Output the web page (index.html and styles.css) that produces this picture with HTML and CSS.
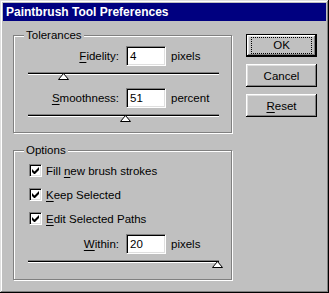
FILE: index.html
```html
<!DOCTYPE html>
<html lang="en">
<head>
  <meta charset="UTF-8">
  <title>Paintbrush Tool Preferences</title>
  <link rel="stylesheet" href="styles.css">
</head>
<body>

<div class="dialog">
  <div class="titlebar">Paintbrush Tool Preferences</div>

  <div class="dialog-body">
    <div class="groups">
      <fieldset class="group group-tolerances">
        <legend>Tolerances</legend>

        <div class="field field-first">
          <label class="field-label"><u>F</u>idelity:</label>
          <div class="input">4</div>
          <span class="unit">pixels</span>
        </div>
        <div class="slider">
          <div class="track"></div>
          <svg class="thumb" style="left: 30px" width="11" height="8" viewBox="0 0 11 8"><polygon points="0.5,6.5 5.5,0.5 10.5,6.5" fill="#fff" stroke="#000"/></svg>
        </div>

        <div class="field">
          <label class="field-label"><u>S</u>moothness:</label>
          <div class="input">51</div>
          <span class="unit">percent</span>
        </div>
        <div class="slider">
          <div class="track"></div>
          <svg class="thumb" style="left: 92px" width="11" height="8" viewBox="0 0 11 8"><polygon points="0.5,6.5 5.5,0.5 10.5,6.5" fill="#fff" stroke="#000"/></svg>
        </div>
      </fieldset>

      <fieldset class="group group-options">
        <legend>Options</legend>

        <div class="checks">
          <div class="check">
            <span class="box"><svg width="7" height="7" viewBox="0 0 7 7"><path d="M0 2v3l2 2h1l4-4V0L2.5 4.5z" fill="#000"/></svg></span>
            <span>Fill <u>n</u>ew brush strokes</span>
          </div>
          <div class="check">
            <span class="box"><svg width="7" height="7" viewBox="0 0 7 7"><path d="M0 2v3l2 2h1l4-4V0L2.5 4.5z" fill="#000"/></svg></span>
            <span><u>K</u>eep Selected</span>
          </div>
          <div class="check">
            <span class="box"><svg width="7" height="7" viewBox="0 0 7 7"><path d="M0 2v3l2 2h1l4-4V0L2.5 4.5z" fill="#000"/></svg></span>
            <span><u>E</u>dit Selected Paths</span>
          </div>
        </div>

        <div class="field field-within">
          <label class="field-label"><u>W</u>ithin:</label>
          <div class="input">20</div>
          <span class="unit">pixels</span>
        </div>
        <div class="slider slider-last">
          <div class="track"></div>
          <svg class="thumb" style="left: 184px" width="11" height="8" viewBox="0 0 11 8"><polygon points="0.5,6.5 5.5,0.5 10.5,6.5" fill="#fff" stroke="#000"/></svg>
        </div>
      </fieldset>
    </div>

    <div class="buttons">
      <button class="btn btn-default"><span class="focus">OK</span></button>
      <button class="btn">Cancel</button>
      <button class="btn"><u>R</u>eset</button>
    </div>
  </div>
</div>

</body>
</html>
```

FILE: styles.css
```css
body {
  margin: 0;
  background: #c0c0c0;
  font-family: "Liberation Sans", Arial, sans-serif;
  font-size: 11.5px;
  color: #000;
}

u {
  text-decoration-thickness: 1px;
  text-underline-offset: 2px;
}

.dialog {
  width: 329px;
  height: 293px;
  box-sizing: border-box;
  padding: 3px;
  background: #c0c0c0;
  box-shadow: inset -1px -1px 0 #000, inset 1px 1px 0 #dfdfdf,
              inset -2px -2px 0 #808080, inset 2px 2px 0 #fff;
}

.titlebar {
  height: 18px;
  line-height: 18px;
  padding-left: 3px;
  background: #000080;
  color: #fff;
  font-weight: bold;
  font-size: 12px;
}

.dialog-body {
  display: flex;
  padding: 8px 0 0 10px;
}

.groups {
  width: 219px;
}

/* etched group boxes */
.group {
  margin: 0;
  padding: 0;
  width: 219px;
  box-sizing: border-box;
  border: 1px solid #808080;
  box-shadow: 1px 1px 0 #fff, inset 1px 1px 0 #fff;
}

.group legend {
  margin-left: 10px;
  padding: 0 2px;
  line-height: 13px;
  background: #c0c0c0;
}

.group-tolerances {
  padding-bottom: 9px;
}

.group-options {
  margin-top: 11px;
  padding-bottom: 10px;
}

.field {
  display: flex;
  align-items: center;
  height: 20px;
  margin-top: 7px;
}

.field-first {
  margin-top: 4px;
}

.field-label {
  width: 105px;
  text-align: right;
}

.input {
  width: 40px;
  height: 20px;
  box-sizing: border-box;
  margin-left: 7px;
  padding: 2px 0 0 3px;
  background: #fff;
  line-height: 15px;
  border-top: 1px solid #808080;
  border-left: 1px solid #808080;
  border-right: 1px solid #fff;
  border-bottom: 1px solid #fff;
  box-shadow: inset 1px 1px 0 #000, inset -1px -1px 0 #dfdfdf;
}

.unit {
  margin-left: 5px;
}

.slider {
  position: relative;
  margin: 6px 0 0 14px;
  width: 191px;
  height: 9px;
}

.track {
  height: 1px;
  background: #000;
  border-top: 1px solid #808080;
  border-bottom: 1px solid #fff;
}

.thumb {
  position: absolute;
  top: 1px;
}

.checks {
  display: flex;
  flex-direction: column;
  gap: 11px;
  margin-top: 7px;
  padding-left: 15px;
}

.check {
  display: flex;
  align-items: center;
  gap: 4px;
  height: 13px;
}

.box {
  width: 13px;
  height: 13px;
  box-sizing: border-box;
  display: flex;
  align-items: center;
  justify-content: center;
  background: #fff;
  border-top: 1px solid #808080;
  border-left: 1px solid #808080;
  border-right: 1px solid #fff;
  border-bottom: 1px solid #fff;
  box-shadow: inset 1px 1px 0 #000, inset -1px -1px 0 #dfdfdf;
}

.field-within {
  margin-top: 9px;
}

.buttons {
  display: flex;
  flex-direction: column;
  gap: 7px;
  margin-left: 14px;
  padding-top: 5px;
}

.btn {
  width: 71px;
  height: 23px;
  padding: 0;
  font: inherit;
  color: #000;
  background: #c0c0c0;
  border: none;
  box-shadow: inset -1px -1px 0 #000, inset 1px 1px 0 #fff,
              inset -2px -2px 0 #808080, inset 2px 2px 0 #dfdfdf;
}

.btn-default {
  border: 1px solid #000;
  display: flex;
  align-items: center;
  justify-content: center;
}

.focus {
  width: 59px;
  height: 15px;
  line-height: 15px;
  outline: 1px dotted #000;
}
```
